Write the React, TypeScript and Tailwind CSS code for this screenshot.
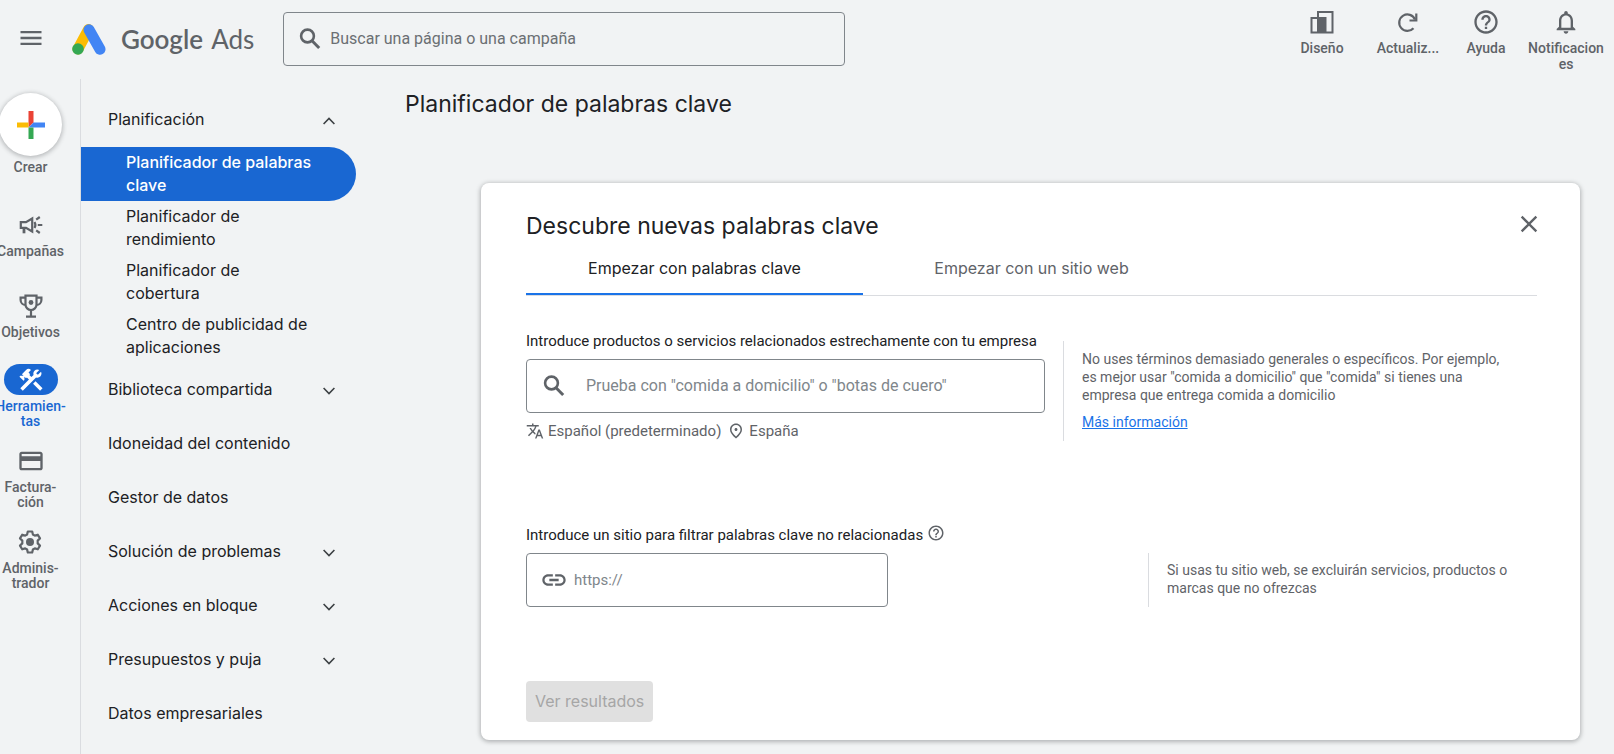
import { useState } from "react";
import type { ReactNode } from "react";
import {
  MdClose,
  MdConstruction,
  MdHelpOutline,
  MdLink,
  MdMenu,
  MdNotificationsNone,
  MdOutlineCreditCard,
  MdOutlinePlace,
  MdTranslate,
} from "react-icons/md";

interface RailItem {
  lines: string[];
  icon: ReactNode;
  active?: boolean;
  className?: string;
}

interface MenuSection {
  label: string;
  expandable?: boolean;
  children?: string[];
}

const SearchIcon = () => (
  <svg viewBox="0 0 28 28" className="size-7 shrink-0" fill="none" stroke="currentColor">
    <circle cx="11.500" cy="11" r="6.400" strokeWidth="2.600" />
    <path d="m16 15.800 7.200 7.200" strokeWidth="3" />
  </svg>
);

const CampaignIcon = () => (
  <svg viewBox="0 0 24 24" className="size-6" fill="none" stroke="currentColor" strokeWidth="2.200">
    <path d="M1.800 9.200h5.200l6.200-3.700v13L7 14.800H1.800z" />
    <path d="M5 14.800V20.300" strokeWidth="2.800" />
    <path d="M15.500 9q1.800 3 0 6" />
    <path d="M18.800 12h4.500M17.200 6.700l3.600-2.700M17.200 17.300l3.600 2.700" />
  </svg>
);

const TrophyIcon = () => (
  <svg viewBox="0 0 24 24" className="size-6" fill="none" stroke="currentColor" strokeWidth="2.200">
    <path d="M6.500 1.600h11v8.900a5.500 5.500 0 0 1-11 0z" />
    <path d="M6.500 3.600H1.600v2.400a5 5 0 0 0 5 5M17.500 3.600h4.900v2.400a5 5 0 0 1-5 5" />
    <path d="M12 16v6M7 22.600h10" />
    <circle cx="12" cy="8.500" r="2.400" fill="currentColor" stroke="none" />
  </svg>
);

const GearIcon = () => (
  <svg viewBox="0 0 24 24" className="size-6" fill="none" stroke="currentColor" strokeWidth="2.200">
    <path
      strokeLinejoin="round"
      d="M9.800 1.500h4.400l.7 3 1.900 1.100 3-.9 2.200 3.700-2.300 2.200v2.800l2.300 2.200-2.200 3.700-3-.9-1.900 1.100-.7 3H9.800l-.7-3-1.900-1.100-3 .9L2 15.600l2.300-2.200v-2.800L2 8.400l2.200-3.700 3 .9 1.900-1.100z"
    />
    <circle cx="12" cy="12" r="4" fill="currentColor" stroke="none" />
  </svg>
);

const LayoutIcon = () => (
  <svg viewBox="0 0 24 24" className="size-6" fill="none" stroke="currentColor" strokeWidth="2">
    <path d="M8 8V2h14.500v20.500h-21V8z" />
    <path d="M7 7h9.500v16H7z" fill="currentColor" stroke="none" />
  </svg>
);

const RefreshIcon = () => (
  <svg viewBox="0 0 24 24" className="size-6" fill="none" stroke="currentColor" strokeWidth="2.200">
    <path d="M17.500 18.200A8.200 8.200 0 1 1 19 9.500" />
    <path d="M20.300 3.500v7H13.500" />
  </svg>
);

const AdsLogo = () => (
  <svg viewBox="0 0 34 31" className="h-[31px] w-[34px]">
    <path d="M16.500 5.500 6 25" stroke="#fbbc04" strokeWidth="11" strokeLinecap="round" />
    <path d="M17 5.700 28 25.200" stroke="#4285f4" strokeWidth="11" strokeLinecap="round" />
    <circle cx="6" cy="25" r="5.800" fill="#34a853" />
  </svg>
);

const PlusIcon = () => (
  <svg viewBox="0 0 28 28" className="size-7">
    <path d="M11.500 0h5v11.500l-5 5z" fill="#ea4335" />
    <path d="M0 11.500h11.500v5H0z" fill="#fbbc04" />
    <path d="M16.500 11.500H28v5H11.500z" fill="#4285f4" />
    <path d="M11.500 16.500h5V28h-5z" fill="#34a853" />
  </svg>
);

const Chevron = ({ up }: { up?: boolean }) => (
  <svg viewBox="0 0 12 8" className="mt-0.5 h-2 w-3" fill="none" stroke="#3c4043" strokeWidth="1.600">
    <path d={up ? "M.600 7 6 1.500 11.400 7" : "M.600 1 6 6.500 11.400 1"} />
  </svg>
);

const railItems: RailItem[] = [
  { lines: ["Campañas"], icon: <CampaignIcon />, className: "mb-[31px]" },
  { lines: ["Objetivos"], icon: <TrophyIcon />, className: "mb-6" },
  { lines: ["Herramien-", "tas"], icon: <MdConstruction className="size-7" />, active: true, className: "mb-4" },
  { lines: ["Factura-", "ción"], icon: <MdOutlineCreditCard className="size-7" />, className: "mb-4" },
  { lines: ["Adminis-", "trador"], icon: <GearIcon /> },
];

const menuSections: MenuSection[] = [
  {
    label: "Planificación",
    expandable: true,
    children: [
      "Planificador de palabras clave",
      "Planificador de rendimiento",
      "Planificador de cobertura",
      "Centro de publicidad de aplicaciones",
    ],
  },
  { label: "Biblioteca compartida", expandable: true },
  { label: "Idoneidad del contenido" },
  { label: "Gestor de datos" },
  { label: "Solución de problemas", expandable: true },
  { label: "Acciones en bloque", expandable: true },
  { label: "Presupuestos y puja", expandable: true },
  { label: "Datos empresariales" },
];

function Header() {
  return (
    <header className="flex h-[79px] shrink-0 items-start">
      <button aria-label="Menú principal" className="mt-6 ml-[17px] text-[#5f6368]">
        <MdMenu className="size-7" />
      </button>
      <a href="#" className="mt-[23px] ml-[27px] flex items-center text-[#5f6368]">
        <AdsLogo />
        <span className="ml-[15px] font-[Lato] text-[26px] leading-8 font-semibold">Google</span>
        <span className="ml-2 font-[Lato] text-[26px] leading-8">Ads</span>
      </a>
      <label className="mt-3 ml-[29px] flex h-[54px] w-full max-w-[562px] items-center rounded border border-[#80868b] px-3 text-[#5f6368]">
        <SearchIcon />
        <input
          type="text"
          placeholder="Buscar una página o una campaña"
          aria-label="Buscar"
          className="ml-1.5 min-w-0 flex-1 bg-transparent text-base outline-none placeholder:text-[#6b6f73]"
        />
      </label>
      <div className="ml-auto flex pt-[10px] text-sm leading-4 font-medium text-[#5f6368]">
        <button className="flex w-20 flex-col items-center gap-1.5">
          <LayoutIcon />
          Diseño
        </button>
        <button className="flex w-[92px] flex-col items-center gap-1.5">
          <RefreshIcon />
          Actualiz...
        </button>
        <button className="flex w-16 flex-col items-center gap-1.5">
          <MdHelpOutline className="-my-0.5 size-7" />
          Ayuda
        </button>
        <button className="flex w-24 flex-col items-center gap-1.5">
          <MdNotificationsNone className="-my-0.5 size-7" />
          <span className="w-20 break-all">Notificaciones</span>
        </button>
      </div>
    </header>
  );
}

function Rail() {
  return (
    <nav className="flex w-[81px] shrink-0 flex-col border-r border-[#dadce0] pt-[14px]">
      <div className="-ml-px flex w-[63px] flex-col items-center text-sm leading-[15px] font-medium text-[#5f6368]">
        <button className="mb-[34px] flex flex-col items-center gap-1">
          <span className="flex size-[63px] items-center justify-center rounded-full bg-white shadow-[0_1px_4px_1px_rgba(60,64,67,0.3)]">
            <PlusIcon />
          </span>
          Crear
        </button>
        {railItems.map((item) => (
          <button
            key={item.lines[0]}
            className={`flex flex-col items-center gap-1 ${item.className ?? ""} ${
              item.active ? "text-[#1967d2]" : ""
            }`}
          >
            <span
              className={`flex h-[31px] w-[54px] items-center justify-center rounded-full ${
                item.active ? "bg-[#1967d2] text-white" : ""
              }`}
            >
              {item.icon}
            </span>
            <span>
              {item.lines.map((line) => (
                <span key={line} className="block">
                  {line}
                </span>
              ))}
            </span>
          </button>
        ))}
      </div>
    </nav>
  );
}

function SideMenu() {
  const [open, setOpen] = useState("Planificación");
  const [current, setCurrent] = useState("Planificador de palabras clave");

  return (
    <nav className="w-[275px] shrink-0 pt-[14px] font-[Inter] text-base leading-[23px] text-[#202124]">
      {menuSections.map((section) => (
        <div key={section.label}>
          <button
            onClick={() => setOpen(open === section.label ? "" : section.label)}
            className="flex h-[54px] w-full items-center justify-between pr-[21px] pb-px pl-[27px] text-left"
          >
            {section.label}
            {section.expandable && <Chevron up={open === section.label && !!section.children} />}
          </button>
          {open === section.label &&
            section.children?.map((child) => (
              <button
                key={child}
                onClick={() => setCurrent(child)}
                className={`flex h-[54px] w-full items-center rounded-r-full pr-10 pb-px pl-[45px] text-left ${
                  current === child ? "bg-[#1967d2] font-medium text-white" : ""
                }`}
              >
                {child}
              </button>
            ))}
        </div>
      ))}
    </nav>
  );
}

function DiscoverCard() {
  const [tab, setTab] = useState(0);
  const tabs = ["Empezar con palabras clave", "Empezar con un sitio web"];

  return (
    <section className="mt-[63px] ml-[76px] rounded-lg bg-white pt-[25px] pr-[43px] pb-[18px] pl-[45px] shadow-[0_1px_4px_1px_rgba(60,64,67,0.35)]">
      <div className="flex items-start justify-between">
        <h2 className="font-[Inter] text-[23px] leading-9 text-[#202124]">Descubre nuevas palabras clave</h2>
        <button aria-label="Cerrar" className="-mr-1.5 pt-0.5 text-[#5f6368]">
          <MdClose className="size-7" />
        </button>
      </div>

      <div role="tablist" className="flex border-b border-[#dadce0] font-[Inter] text-base">
        {tabs.map((label, i) => (
          <button
            key={label}
            role="tab"
            aria-selected={tab === i}
            onClick={() => setTab(i)}
            className={`h-[51px] w-1/3 border-b-2 pb-0.5 ${
              tab === i ? "border-[#1a73e8] text-[#202124]" : "border-transparent text-[#5f6368]"
            }`}
          >
            {label}
          </button>
        ))}
      </div>

      <div className="mt-[35px] flex">
        <div className="w-[519px]">
          <label htmlFor="keywords" className="block text-[15px] leading-5 text-[#202124]">
            Introduce productos o servicios relacionados estrechamente con tu empresa
          </label>
          <div className="mt-2 flex h-[54px] items-center rounded border border-[#80868b] px-[13px] text-[#5f6368]">
            <SearchIcon />
            <input
              id="keywords"
              type="text"
              placeholder={'Prueba con "comida a domicilio" o "botas de cuero"'}
              className="ml-[18px] min-w-0 flex-1 bg-transparent text-base outline-none placeholder:text-[#80868b]"
            />
          </div>
          <div className="mt-2 flex items-center text-[15px] leading-5 text-[#5f6368]">
            <MdTranslate className="mr-1 size-[18px]" />
            Español (predeterminado)
            <MdOutlinePlace className="mr-1 ml-1.5 size-[18px]" />
            España
          </div>
        </div>
        <div className="mt-[10px] ml-[18px] flex-1 border-l border-[#dadce0] pt-[9px] pl-[18px] text-sm leading-[18px] text-[#5f6368]">
          <p className="max-w-[430px]">
            No uses términos demasiado generales o específicos. Por ejemplo, es mejor usar "comida a domicilio" que
            "comida" si tienes una empresa que entrega comida a domicilio
          </p>
          <a href="#" className="mt-[9px] inline-block text-[#1a73e8] underline">
            Más información
          </a>
        </div>
      </div>

      <div className="mt-[83px] flex items-end justify-between">
        <div className="w-[362px]">
          <label htmlFor="site" className="flex items-center gap-1 text-[15px] leading-5 whitespace-nowrap text-[#202124]">
            Introduce un sitio para filtrar palabras clave no relacionadas
            <MdHelpOutline className="mb-1 size-[18px] shrink-0 text-[#5f6368]" />
          </label>
          <div className="mt-[7px] flex h-[54px] items-center rounded border border-[#80868b] px-[13px] text-[#5f6368]">
            <MdLink className="size-7" />
            <input
              id="site"
              type="text"
              placeholder="https://"
              className="ml-1.5 min-w-0 flex-1 bg-transparent text-[15px] outline-none placeholder:text-[#80868b]"
            />
          </div>
        </div>
        <p className="flex h-[54px] w-[389px] items-center border-l border-[#dadce0] pb-0.5 pl-[18px] text-sm leading-[18px] text-[#5f6368]">
          Si usas tu sitio web, se excluirán servicios, productos o marcas que no ofrezcas
        </p>
      </div>

      <button
        disabled
        className="mt-[74px] h-[41px] rounded bg-[#e0e0e0] px-[9px] pb-0.5 font-[Inter] text-base text-[#a6a6a6]"
      >
        Ver resultados
      </button>
    </section>
  );
}

export default function App() {
  return (
    <div className="flex min-h-screen flex-col bg-[#f1f3f4] font-[Roboto,sans-serif]">
      <Header />
      <div className="flex flex-1">
        <Rail />
        <SideMenu />
        <main className="min-w-0 flex-1 pt-[9px] pr-[34px] pl-[49px]">
          <h1 className="font-[Inter] text-[23px] leading-8 text-[#202124]">Planificador de palabras clave</h1>
          <DiscoverCard />
        </main>
      </div>
    </div>
  );
}
